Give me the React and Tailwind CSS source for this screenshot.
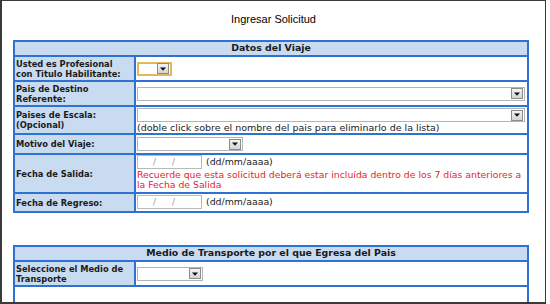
import React from "react";

const Arrow = () => (
  <div className="w-[12px] h-[11px] border border-[#8c8c8c] bg-gradient-to-b from-[#f4f4f4] to-[#d4d4d4] flex items-center justify-center shrink-0">
    <svg width="6" height="4" viewBox="0 0 6 4">
      <path d="M0 0.5 L6 0.5 L3 3.8 Z" fill="#111" />
    </svg>
  </div>
);

const Select = ({ className = "", focused = false }) => (
  <div
    className={`h-[14px] flex items-center justify-end bg-white pr-[1px] ${
      focused ? "border-2 border-[#e3b75d]" : "border border-[#b4b4b4]"
    } ${className}`}
  >
    <Arrow />
  </div>
);

const DateInput = () => (
  <div className="w-[65px] h-[14px] border border-[#b9b9b9] bg-white flex items-center text-[#9a9a9a] text-[9px] leading-none">
    <span className="ml-[15px]">/</span>
    <span className="ml-[16px]">/</span>
  </div>
);

const Row = ({ label, h, children, align = "items-center" }) => (
  <div className={`flex border-t-2 border-[#2f73d2] ${h}`}>
    <div className="w-[121px] shrink-0 border-r-2 border-[#2f73d2] bg-[#c8dbf0] pl-[1px] flex items-center font-bold text-[8.3px] leading-[10px] text-[#1a1a1a]">
      <div>{label}</div>
    </div>
    <div className={`flex-1 pl-[1px] pr-[2px] flex ${align}`}>{children}</div>
  </div>
);

const Header = ({ children }) => (
  <div className="h-[13px] bg-[#c8dbf0] flex items-center justify-center font-bold text-[9.4px] text-[#1a1a1a]">
    {children}
  </div>
);

export default function App() {
  return (
    <div className="w-[550px] h-[304px] bg-white overflow-hidden" style={{ fontFamily: '"DejaVu Sans", Verdana, sans-serif' }}>
      <div className="w-[546px] h-[304px] border-l-2 border-t border-r border-b-2 border-[#3a3a3a] overflow-hidden">
        <div className="h-[39px] pt-[11px] text-center text-[11px] text-black leading-[14px]" style={{ fontFamily: '"Liberation Sans", Arial, sans-serif' }}>
          Ingresar Solicitud
        </div>

        <div className="ml-[11px] w-[516px] border-2 border-[#2f73d2]">
          <Header>Datos del Viaje</Header>
          <Row label={<>Usted es Profesional<br />con Titulo Habilitante:</>} h="h-[25px]">
            <Select focused className="w-[35px]" />
          </Row>
          <Row label={<>Pais de Destino<br />Referente:</>} h="h-[25px]">
            <Select className="w-full" />
          </Row>
          <Row label={<>Paises de Escala:<br />(Opcional)</>} h="h-[28px]" align="items-start">
            <div className="w-full pt-[1px]">
              <Select className="w-full" />
              <div className="text-[9.5px] leading-[12px] text-[#222]">
                (doble click sobre el nombre del pais para eliminarlo de la lista)
              </div>
            </div>
          </Row>
          <Row label="Motivo del Viaje:" h="h-[20px]">
            <Select className="w-[106px]" />
          </Row>
          <Row label="Fecha de Salida:" h="h-[39px]" align="items-start">
            <div className="w-full">
              <div className="flex items-center gap-[4px] text-[9.4px] text-[#222]">
                <DateInput />
                <span>(dd/mm/aaaa)</span>
              </div>
              <div className="text-[9.3px] leading-[10px] text-[#e8232b] mt-[1px]">
                Recuerde que esta solicitud deberá estar incluída dentro de los 7 días anteriores a<br />
                la Fecha de Salida
              </div>
            </div>
          </Row>
          <Row label="Fecha de Regreso:" h="h-[19px]">
            <div className="flex items-center gap-[4px] text-[9.4px] text-[#222]">
              <DateInput />
              <span>(dd/mm/aaaa)</span>
            </div>
          </Row>
        </div>

        <div className="ml-[11px] mt-[32px] w-[516px] border-2 border-b-0 border-[#2f73d2]">
          <Header>Medio de Transporte por el que Egresa del Pais</Header>
          <Row label={<>Seleccione el Medio de<br />Transporte</>} h="h-[25px]">
            <Select className="w-[66px]" />
          </Row>
          <div className="h-[40px] border-t-2 border-[#2f73d2]" />
        </div>
      </div>
    </div>
  );
}
